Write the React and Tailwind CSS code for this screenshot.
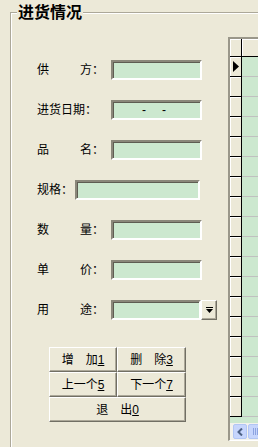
import React from "react";

const font = "font-['Liberation_Sans','Noto_Sans_CJK_SC',sans-serif]";

const sunken =
    "h-[20px] bg-[#CCE8CF] border-2 border-t-[#8A877A] border-l-[#8A877A] border-b-white border-r-white shadow-[inset_1px_1px_0_#5E5C52]";

const raised =
    "bg-[#ECE9D8] border border-t-white border-l-white border-b-[#716F64] border-r-[#716F64] shadow-[inset_-1px_-1px_0_#ACA899]";

const SplitLabel = ({ a, b }) => (
    <div className="w-[74px] flex">
        <div className="w-[67px] flex justify-between">
            <span>{a}</span>
            <span>{b}：</span>
        </div>
    </div>
);

const Field = ({ label, width = "w-[91px]", children }) => (
    <div className="h-[20px] flex items-center">
        {label}
        <div className={`${sunken} ${width}`}>{children}</div>
    </div>
);

const GridBody = () => {
    const rows = Array.from({ length: 18 }, (_, i) => i);
    return (
        <div className="w-[60px] h-[404px] flex flex-col border-l-2 border-t-2 border-b border-[#9A978A] border-b-white">
            <div className="flex-1 flex flex-col bg-[#CCE8CF]">
                {/* header row */}
                <div className="h-[18px] flex border-b border-black">
                    <div className="w-[12px] bg-[#ECE9D8] border-r border-black shadow-[inset_1px_1px_0_#fff]" />
                    <div className="flex-1 bg-[#ECE9D8] shadow-[inset_1px_1px_0_#fff]" />
                </div>
                {rows.map((i) => (
                    <div key={i} className="h-[20px] flex">
                        <div className="w-[12px] bg-[#ECE9D8] border-r border-b border-black shadow-[inset_1px_1px_0_#fff] flex items-center pl-[3px]">
                            {i === 0 && (
                                <svg width="6" height="11" viewBox="0 0 6 11">
                                    <path d="M0 0 L6 5.5 L0 11 Z" fill="#000" />
                                </svg>
                            )}
                        </div>
                        <div className="flex-1 border-b border-[#C0C0C0]" />
                    </div>
                ))}
                <div className="flex-1" />
                {/* horizontal scrollbar */}
                <div className="h-[17px] flex items-center pl-[3px] bg-[#F3F2EC]">
                    <div className="w-[14px] h-[15px] rounded-[2px] bg-[#C6D5FC] border border-[#B2C6F4] flex items-center justify-center">
                        <svg width="6" height="8" viewBox="0 0 6 8">
                            <path d="M5 0.5 L1.5 4 L5 7.5" stroke="#4D6185" strokeWidth="2" fill="none" />
                        </svg>
                    </div>
                    <div className="ml-[1px] w-[30px] h-[15px] rounded-[2px] bg-[#C6D5FC] border border-[#B2C6F4] flex items-center pl-[4px] gap-[1px]">
                        {[0, 1, 2, 3].map((g) => (
                            <div key={g} className="w-[1px] h-[7px] bg-[#8CA3E0]" />
                        ))}
                    </div>
                </div>
            </div>
        </div>
    );
};

const Btn = ({ children, className = "" }) => (
    <div className={`${raised} h-[25px] flex items-center justify-center text-[12px] text-black ${className}`}>
        {children}
    </div>
);

export default function App() {
    return (
        <div className={`w-[258px] h-[447px] overflow-hidden bg-[#ECE9D8] text-black ${font}`}>
            <div className="relative ml-[10px] mt-[12px] h-[435px] flex border-t border-l border-[#ACA899] shadow-[inset_1px_1px_0_#fff]">
                <div className="absolute left-[6px] top-[-10px] px-[1px] bg-[#ECE9D8] text-[16px] leading-[20px] font-bold">
                    进货情况
                </div>

                {/* form column */}
                <div className="w-[217px] shrink-0 pl-[26px] pt-[47px] text-[12px]">
                    <div className="flex flex-col gap-[20px]">
                        <Field label={<SplitLabel a="供" b="方" />} />
                        <Field label={<div className="w-[74px]">进货日期：</div>}>
                            <div className="h-full flex items-center pl-[29px] gap-[16px] text-[12px]">
                                <span>-</span>
                                <span>-</span>
                            </div>
                        </Field>
                        <Field label={<SplitLabel a="品" b="名" />} />
                        <Field label={<div className="w-[38px]">规格：</div>} width="w-[125px]" />
                        <Field label={<SplitLabel a="数" b="量" />} />
                        <Field label={<SplitLabel a="单" b="价" />} />
                        <div className="h-[20px] flex items-center">
                            <SplitLabel a="用" b="途" />
                            <div className={`${sunken} w-[90px]`} />
                            <div className={`${raised} w-[16px] h-[20px] flex items-center justify-center`}>
                                <svg width="7" height="6" viewBox="0 0 7 6">
                                    <rect x="0" y="0" width="7" height="1" fill="#000" />
                                    <path d="M0 2 L7 2 L3.5 6 Z" fill="#000" />
                                </svg>
                            </div>
                        </div>
                    </div>

                    {/* buttons */}
                    <div className="mt-[27px] ml-[12px] grid grid-cols-[68px_69px]">
                        <Btn>
                            增　加<u>1</u>
                        </Btn>
                        <Btn>
                            删　除<u>3</u>
                        </Btn>
                        <Btn>
                            上一个<u>5</u>
                        </Btn>
                        <Btn>
                            下一个<u>7</u>
                        </Btn>
                        <Btn className="col-span-2">
                            退　出<u>0</u>
                        </Btn>
                    </div>
                </div>

                {/* data grid */}
                <div className="mt-[24px]">
                    <GridBody />
                </div>
            </div>
        </div>
    );
}
